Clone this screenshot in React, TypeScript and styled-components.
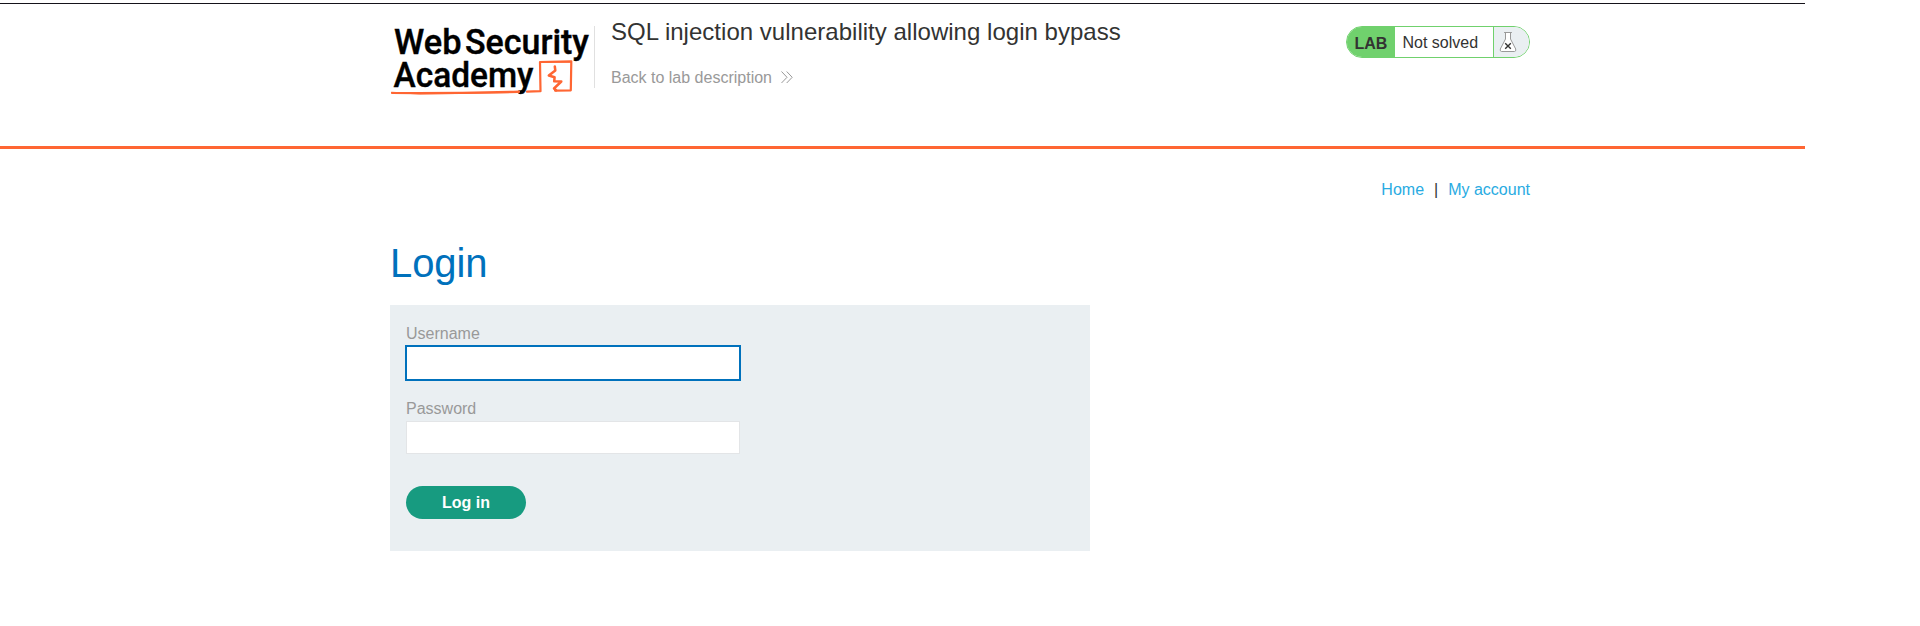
import React from "react";
import styled, { createGlobalStyle } from "styled-components";

const GlobalStyle = createGlobalStyle`
  * { box-sizing: border-box; }
  body {
    margin: 0;
    background: #fff;
    color: #333332;
    font: 16px/18px "Liberation Sans", Arial, sans-serif;
  }
`;

const Page = styled.div`
  width: 1805px;
  padding-top: 3px;
`;

const Header = styled.header`
  height: 146px;
  border-top: 1px solid #15131a;
  border-bottom: 3px solid #ff6633;
`;

const Container = styled.div`
  width: 1140px;
  margin-left: 390px;
`;

const HeaderRow = styled(Container)`
  display: flex;
  align-items: flex-start;
  padding-top: 22px;
`;

const Logo = styled.svg`
  display: block;
  width: 204px;
  height: 84px;
  margin-top: -12px;
  overflow: visible;
`;

const TitleBlock = styled.div`
  height: 62px;
  padding-left: 16px;
  border-left: 1px solid #e0e0e0;
  flex: 1;
`;

const Title = styled.h2`
  margin: -8px 0 23px;
  font-size: 24px;
  line-height: 28px;
  font-weight: 400;
  letter-spacing: 0.02px;
`;

const BackLink = styled.a`
  display: flex;
  align-items: center;
  gap: 9px;
  color: #999;
`;

const LabStatus = styled.div`
  display: flex;
  width: 184px;
  height: 32px;
  border: 1px solid #70d16d;
  border-radius: 16px;
  overflow: hidden;
`;

const LabTag = styled.span`
  width: 48px;
  padding: 8px 0 0 7.5px;
  background: #70d16d;
  font-weight: 700;
`;

const LabText = styled.span`
  flex: 1;
  padding: 7px 0 0 7.5px;
`;

const LabIcon = styled.span`
  width: 36px;
  padding: 4px 0 0 5px;
  border-left: 1px solid #70d16d;
  background: #eaeff2;

  svg { display: block; }
`;

const Nav = styled.nav`
  display: flex;
  justify-content: flex-end;
  gap: 10px;
  padding-top: 32px;
`;

const NavLink = styled.a`
  color: #29abe2;
`;

const Heading = styled.h1`
  margin: 41px 0 19px;
  color: #0071bc;
  font-size: 40px;
  line-height: 46px;
  font-weight: 400;
  letter-spacing: -0.1px;
`;

const LoginForm = styled.form`
  width: 700px;
  height: 246px;
  padding: 20px 16px;
  background: #eaeff2;
`;

const Label = styled.label`
  display: block;
  height: 21px;
  color: #999;
`;

const Input = styled.input<{ $active?: boolean }>`
  display: block;
  width: ${(p) => (p.$active ? 336 : 334)}px;
  height: ${(p) => (p.$active ? 36 : 33)}px;
  margin: ${(p) => (p.$active ? "-1px -1px 19px" : "0 0 32px")};
  padding: 0 8px;
  border: ${(p) => (p.$active ? "2px solid #0071bc" : "1px solid #e3e5e7")};
  border-radius: 0;
  outline: none;
  background: #fff;
  font: inherit;
`;

const Button = styled.button`
  display: block;
  width: 120px;
  height: 33px;
  padding: 0;
  border: 0;
  border-radius: 17px;
  background: #179b80;
  color: #fff;
  font: 700 16px/33px "Liberation Sans", Arial, sans-serif;
`;

const AcademyLogo = () => (
  <Logo viewBox="390 14 204 84" aria-label="Web Security Academy">
    <g fill="#000" stroke="#000" strokeWidth="0.4" fontFamily="Roboto, sans-serif" fontWeight="500" fontSize="35.500">
      <text x="394" y="54.3" textLength="67.5" lengthAdjust="spacingAndGlyphs">Web</text>
      <text x="465" y="54.3" textLength="124" lengthAdjust="spacingAndGlyphs">Security</text>
      <text x="393.5" y="87.2" textLength="140" lengthAdjust="spacingAndGlyphs">Academy</text>
    </g>
    <g fill="none" stroke="#ff6633" strokeLinecap="round" strokeLinejoin="round">
      <path strokeWidth="2.200" d="M392 93 Q450 93.500 519 91.700 M527 91.600 L540.500 91.200 L540 62 L571.300 61.300 L570.800 90.300 L555 90.600" />
      <path strokeWidth="1.200" d="M391.500 92.300 L420 93.800 L519 92.500 M540.500 62.300 L570.500 62" />
      <path strokeWidth="2.500" d="M554.800 66.500 L555.300 70.500 L548.800 75.500 L554.600 77.300 L554.200 81.300 L561.300 81.500 L554 88.500 L556 90.300" />
    </g>
  </Logo>
);

const Flask = () => (
  <svg width="18" height="22" viewBox="0 0 18 22" fill="none">
    <path d="M6.500 1.500 V8 L1.300 18 Q.8 20.500 2.500 20.500 H15.500 Q17.200 20.500 16.700 18 L11.500 8 V1.500Z" fill="#fff" stroke="#999" />
    <path d="M5.500 1.500 H12.500" stroke="#999" strokeLinecap="round" />
    <path d="M6.200 12.200 L11.800 17.800 M11.800 12.200 L6.200 17.800" stroke="#333332" strokeWidth="1.400" />
  </svg>
);

export default function App() {
  return (
    <Page>
      <GlobalStyle />
      <Header>
        <HeaderRow>
          <AcademyLogo />
          <TitleBlock>
            <Title>SQL injection vulnerability allowing login bypass</Title>
            <BackLink>
              Back to lab description
              <svg width="12" height="14" viewBox="0 0 12 14" fill="none" stroke="#999">
                <path d="M.5 .5 L6 6.300 L.5 12 M5.700 .5 L11.200 6.300 L5.700 12" />
              </svg>
            </BackLink>
          </TitleBlock>
          <LabStatus>
            <LabTag>LAB</LabTag>
            <LabText>Not solved</LabText>
            <LabIcon><Flask /></LabIcon>
          </LabStatus>
        </HeaderRow>
      </Header>
      <Container as="main">
        <Nav>
          <NavLink>Home</NavLink>
          <span>|</span>
          <NavLink>My account</NavLink>
        </Nav>
        <Heading>Login</Heading>
        <LoginForm>
          <Label htmlFor="username">Username</Label>
          <Input $active id="username" />
          <Label htmlFor="password">Password</Label>
          <Input id="password" type="password" />
          <Button type="button">Log in</Button>
        </LoginForm>
      </Container>
    </Page>
  );
}
